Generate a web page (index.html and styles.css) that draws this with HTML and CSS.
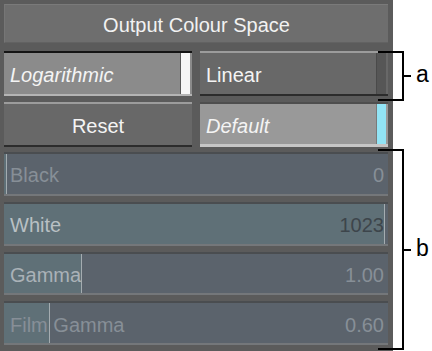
FILE: index.html
```html
<!DOCTYPE html>
<html lang="en">
<head>
    <meta charset="UTF-8">
    <title>Output Colour Space</title>
    <link rel="stylesheet" href="styles.css">
</head>
<body>
<div class="page">
    <div class="panel">
        <div class="title">Output Colour Space</div>
        <div class="btn-row row-mode">
            <div class="btn btn-on">
                <span class="label italic">Logarithmic</span>
                <span class="lamp lamp-white"></span>
            </div>
            <div class="btn btn-off">
                <span class="label">Linear</span>
                <span class="lamp lamp-dark"></span>
            </div>
        </div>
        <div class="btn-row row-action">
            <div class="btn btn-off btn-center">Reset</div>
            <div class="btn btn-on btn-light">
                <span class="label italic">Default</span>
                <span class="lamp lamp-cyan"></span>
            </div>
        </div>
        <div class="slider" style="--fill: 2px">
            <span class="s-label">Black</span>
            <span class="s-value">0</span>
        </div>
        <div class="slider slider-full" style="--fill: 380px">
            <span class="s-label">White</span>
            <span class="s-value">1023</span>
        </div>
        <div class="slider slider-gamma" style="--fill: 77px">
            <span class="s-label">Gamma</span>
            <span class="s-value">1.00</span>
        </div>
        <div class="slider" style="--fill: 45px">
            <span class="s-label">Film Gamma</span>
            <span class="s-value">0.60</span>
        </div>
    </div>

    <div class="callout callout-a">
        <span class="tick"></span>
        <span class="letter">a</span>
    </div>
    <div class="callout callout-b">
        <span class="tick"></span>
        <span class="letter">b</span>
    </div>
</div>
</body>
</html>
```

FILE: styles.css
```css
* {
    box-sizing: border-box;
}
body {
    margin: 0;
    background: #ffffff;
    font-family: "Liberation Sans", Arial, sans-serif;
}
.page {
    position: relative;
    width: 432px;
    height: 351px;
}
.panel {
    width: 393px;
    height: 351px;
    background: #5b5b5b;
    padding: 4px 5px 0 4px;
    display: flex;
    flex-direction: column;
}
.title {
    height: 39px;
    margin-bottom: 8px;
    padding-top: 4px;
    background: #6e6e6e;
    border-top: 1px solid #7a7a7a;
    border-left: 1px solid #767676;
    border-bottom: 1px solid #626262;
    color: #f2f2f2;
    font-size: 20px;
    display: flex;
    align-items: center;
    justify-content: center;
}
.btn-row {
    display: grid;
    grid-template-columns: 188px 188px;
    column-gap: 8px;
}
.row-mode {
    height: 46px;
    margin-bottom: 6px;
}
.row-action {
    height: 45px;
    margin-bottom: 5px;
}
.btn {
    display: flex;
    align-items: center;
    justify-content: space-between;
    padding: 0 2px 0 6px;
    font-size: 20px;
    color: #f4f4f4;
}
.btn .label {
    padding-top: 4px;
}
.btn-on {
    background: #8b8b8b;
    border-top: 2px solid #141414;
    border-bottom: 2px solid #b4b4b4;
}
.btn-light {
    background: #999999;
    border-top: 2px solid #4e4e4e;
    border-bottom: 3px solid #c6c6c6;
}
.btn-off {
    background: #686868;
    border-top: 2px solid #9c9c9c;
    border-bottom: 2px solid #2c2c2c;
}
.btn-center {
    justify-content: center;
    padding: 3px 0 0 0;
}
.italic {
    font-style: italic;
}
.lamp {
    width: 10px;
    align-self: stretch;
}
.lamp-white {
    background: #f6f6f6;
    border-left: 1px solid #5a5a5a;
}
.lamp-dark {
    background: #565656;
    border-left: 1px solid #4a4a4a;
}
.lamp-cyan {
    background: #92e4f5;
    border-left: 1px solid #7a7a7a;
}
.slider {
    height: 44px;
    margin-bottom: 6px;
    width: 384px;
    border-top: 2px solid #4a4d50;
    border-bottom: 2px solid #74777a;
    background: linear-gradient(to right,
        #5f7077 0, #5f7077 var(--fill),
        #a4acb0 var(--fill), #a4acb0 calc(var(--fill) + 1px),
        #5b636c calc(var(--fill) + 1px));
    display: flex;
    align-items: center;
    justify-content: space-between;
    padding: 4px 4px 0 6px;
    font-size: 20px;
    color: #878f97;
}
.slider-full .s-label {
    color: #b9c0c4;
}
.slider-full .s-value {
    color: #3d454b;
}
.slider-gamma .s-label {
    color: #aab2b7;
}
.callout {
    position: absolute;
    left: 378px;
    width: 26px;
    display: flex;
    align-items: center;
    border: 2px solid #000000;
    border-left: none;
}
.callout-a {
    top: 51px;
    height: 50px;
}
.callout-b {
    top: 149px;
    height: 201px;
}
.tick {
    position: absolute;
    left: 26px;
    width: 7px;
    height: 2px;
    background: #000000;
}
.letter {
    position: absolute;
    left: 38px;
    font-size: 23px;
    color: #000000;
    line-height: 1;
    margin-top: -3px;
}
```
